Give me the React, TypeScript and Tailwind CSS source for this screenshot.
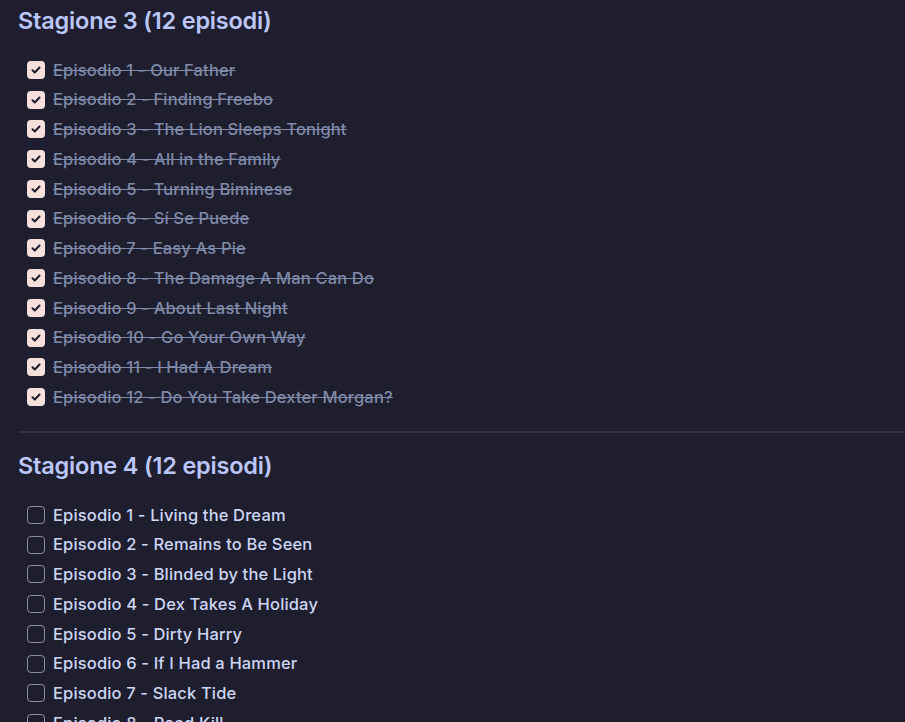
import React from "react"

const seasons = [
  {
    title: "Stagione 3 (12 episodi)",
    done: true,
    episodes: [
      "Our Father",
      "Finding Freebo",
      "The Lion Sleeps Tonight",
      "All in the Family",
      "Turning Biminese",
      "Sí Se Puede",
      "Easy As Pie",
      "The Damage A Man Can Do",
      "About Last Night",
      "Go Your Own Way",
      "I Had A Dream",
      "Do You Take Dexter Morgan?",
    ],
  },
  {
    title: "Stagione 4 (12 episodi)",
    done: false,
    episodes: [
      "Living the Dream",
      "Remains to Be Seen",
      "Blinded by the Light",
      "Dex Takes A Holiday",
      "Dirty Harry",
      "If I Had a Hammer",
      "Slack Tide",
      "Road Kill",
    ],
  },
]

const Check = ({ checked }: { checked: boolean }) =>
  checked ? (
    <span className="flex h-[18px] w-[18px] shrink-0 items-center justify-center rounded-[4px] bg-[#f5e0dc]">
      <svg width="12" height="12" viewBox="0 0 24 24" fill="none" stroke="#1e1e2e" strokeWidth="4" strokeLinecap="round" strokeLinejoin="round">
        <path d="M5 12.5l4.5 4.5L19 7" />
      </svg>
    </span>
  ) : (
    <span className="h-[18px] w-[18px] shrink-0 rounded-[4px] border border-[#8a8fa8]" />
  )

export default function App() {
  return (
    <div className="h-[722px] overflow-hidden bg-[#1e1e2e] pl-[18px] pt-[6px] font-['Inter',sans-serif]">
      {seasons.map((season, idx) => (
        <section key={idx}>
          {idx > 0 && <div className="mb-[18px] mt-[19px] h-[2px] bg-[#313244]" />}
          <h2 className="mb-[20px] text-[23.5px] font-semibold leading-[29px] tracking-[-0.2px] text-[#bcc6fa]">
            {season.title}
          </h2>
          <ul className="pl-[9px]">
            {season.episodes.map((ep, i) => (
              <li key={i} className="flex h-[29.75px] items-center gap-[8px] text-[16.5px] font-medium tracking-[0.15px]">
                <Check checked={season.done} />
                <span
                  className={
                    season.done
                      ? "text-[#7f89a8] line-through decoration-[#7f89a8]"
                      : "text-[#cdd6f4]"
                  }
                >
                  Episodio {i + 1} - {ep}
                </span>
              </li>
            ))}
          </ul>
        </section>
      ))}
    </div>
  )
}
